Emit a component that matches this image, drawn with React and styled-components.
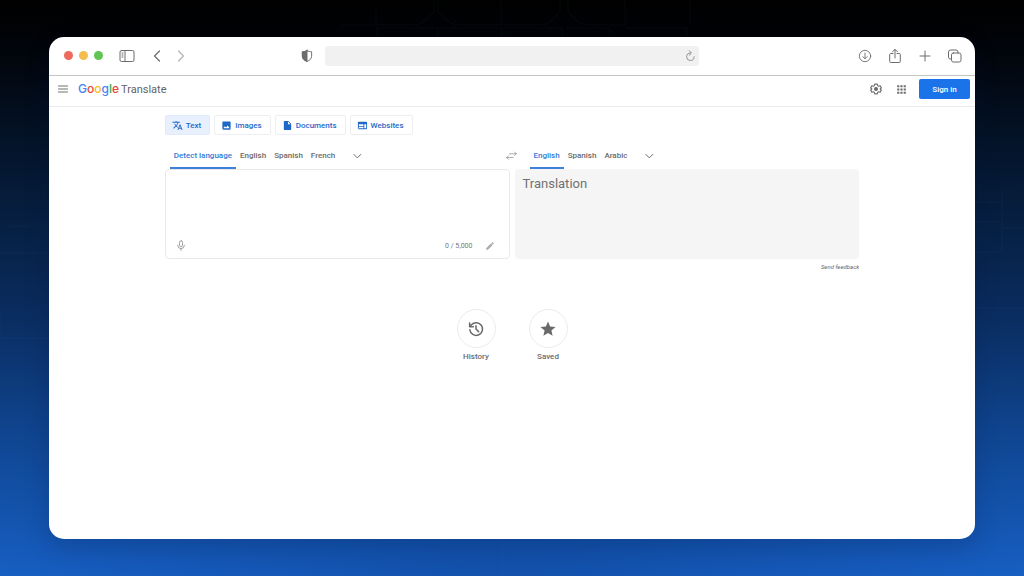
import React, { useState } from "react";
import styled, { createGlobalStyle, css } from "styled-components";

const Global = createGlobalStyle`
  *, *::before, *::after { box-sizing: border-box; }
  body { margin: 0; font-family: Roboto, "Liberation Sans", sans-serif; color: #5f6368; }
  button, textarea, input { font: inherit; color: inherit; }
`;

const Desktop = styled.div`
  position: relative;
  min-height: 100vh;
  padding: 37px 49px;
  display: flex;
  background:
    radial-gradient(ellipse 60% 40% at 50% 100%, rgba(8, 50, 120, 0.35), transparent),
    linear-gradient(180deg, #000 0%, #010409 8%, #051a36 32%, #0a2d60 55%, #104896 78%, #1862c8 100%);
`;

const Traces = styled.svg`
  position: absolute;
  inset: 0;
  width: 100%;
  height: 100%;
  fill: none;
  stroke: #6d9be0;
  stroke-opacity: 0.06;
`;

const Window = styled.div`
  position: relative;
  flex: 1;
  min-width: 0;
  display: flex;
  flex-direction: column;
  background: #fff;
  border-radius: 15px;
  overflow: hidden;
  box-shadow: 0 8px 24px rgba(3, 20, 60, 0.2);
`;

const BrowserBar = styled.div`
  display: grid;
  grid-template-columns: 1fr 374px 1fr;
  align-items: center;
  height: 39px;
  padding-bottom: 1px;
  border-bottom: 1px solid #c4c4c4;
`;

const BarSide = styled.div`
  display: flex;
  align-items: center;
  padding: ${(p) => (p.$end ? "0 12px 0 0" : "0 10px 0 15px")};
  justify-content: ${(p) => (p.$end ? "flex-end" : "flex-start")};
  gap: ${(p) => (p.$end ? "14px" : "0")};
`;

const Lights = styled.div`
  display: flex;
  gap: 6px;
  margin-right: 16px;
`;

const Light = styled.span`
  width: 9px;
  height: 9px;
  border-radius: 50%;
  background: ${(p) => p.$color};
`;

const IconButton = styled.button`
  display: flex;
  align-items: center;
  justify-content: center;
  width: ${(p) => p.$size || 16}px;
  height: ${(p) => p.$size || 16}px;
  padding: 0;
  border: 0;
  background: none;
  color: ${(p) => p.$color || "#6c6c6c"};
  cursor: pointer;
`;

const NavButtons = styled.div`
  display: flex;
  gap: 8px;
  margin-left: 14px;
`;

const Shield = styled(IconButton)`
  margin-left: auto;
`;

const Address = styled.div`
  display: flex;
  align-items: center;
  height: 20px;
  padding-right: 1px;
  border-radius: 4px;
  background: #f1f1f1;
`;

const AddressInput = styled.input`
  flex: 1;
  min-width: 0;
  height: 20px;
  padding: 0 8px;
  border: 0;
  outline: 0;
  background: none;
  font-size: 11px;
`;

const Header = styled.header`
  display: flex;
  align-items: center;
  height: 31px;
  padding: 0 5px 4px 6px;
  border-bottom: 1px solid #e8eaed;
`;

const Logo = styled.a`
  display: flex;
  align-items: baseline;
  gap: 2px;
  margin-left: 7px;
  color: #5f6368;
  font-size: 11px;
  line-height: 16px;
  text-decoration: none;
`;

const Brand = styled.span`
  font-family: Inter, sans-serif;
  font-size: 12px;
  font-weight: 500;
`;

const Letter = styled.span`
  color: ${(p) => p.$color};
`;

const HeaderActions = styled.div`
  display: flex;
  align-items: center;
  gap: 9px;
  margin-left: auto;
`;

const SignIn = styled.button`
  width: 51px;
  height: 20px;
  margin-left: 1px;
  padding: 0;
  border: 0;
  border-radius: 2px;
  background: #1a73e8;
  color: #fff;
  font-size: 8px;
  font-weight: 500;
  cursor: pointer;
`;

const Main = styled.main`
  width: 75%;
  margin: 0 auto;
  padding-top: 8px;
`;

const Modes = styled.nav`
  display: flex;
  gap: 4px;
`;

const Mode = styled.button`
  display: flex;
  align-items: center;
  gap: 3px;
  height: 20px;
  padding: 0 8px 0 6px;
  border: 1px solid ${(p) => (p.$active ? "#e1eafa" : "#eceef1")};
  border-radius: 2px;
  background: ${(p) => (p.$active ? "#e8f0fe" : "#fff")};
  color: #1f68c8;
  font-size: 8px;
  font-weight: 500;
  cursor: pointer;
`;

const Columns = styled.div`
  display: grid;
  grid-template-columns: 1fr 1fr;
  column-gap: 5px;
`;

const Languages = styled.div`
  display: flex;
  align-items: stretch;
  height: 27px;
  margin-top: 7px;
  padding-left: ${(p) => (p.$target ? "15px" : "5px")};
`;

const Language = styled.button`
  padding: 1px 4px 0;
  border: 0;
  border-bottom: 2px solid ${(p) => (p.$active ? "#3c80dc" : "transparent")};
  background: none;
  color: ${(p) => (p.$active ? "#3478d6" : "#6a6a6a")};
  font-size: 8px;
  font-weight: 500;
  cursor: pointer;
`;

const More = styled(IconButton)`
  align-self: center;
  margin-left: 8px;
`;

const Swap = styled(IconButton)`
  align-self: center;
  margin-left: auto;
  margin-right: -10px;
`;

const panel = css`
  height: 90px;
  border-radius: 4px;
`;

const Source = styled.div`
  ${panel}
  display: flex;
  flex-direction: column;
  border: 1px solid #e8e8e8;
`;

const SourceText = styled.textarea`
  flex: 1;
  min-height: 0;
  padding: 6px 8px;
  border: 0;
  outline: 0;
  resize: none;
  background: none;
  font-size: 13px;
`;

const SourceTools = styled.div`
  display: flex;
  align-items: center;
  height: 24px;
  padding: 0 12px 0 8px;
  gap: 10px;
`;

const Count = styled.span`
  margin-left: auto;
  font-size: 7px;
  color: #777;
`;

const Target = styled.output`
  ${panel}
  display: block;
  padding: 6px 8px;
  background: #f5f5f5;
  color: #717171;
  font-size: 13px;
  line-height: 18px;
`;

const FeedbackRow = styled.div`
  display: flex;
  justify-content: flex-end;
  margin-top: 4px;
`;

const Feedback = styled.a`
  color: #666;
  font-size: 6px;
  line-height: 8px;
  font-style: italic;
  text-decoration: none;
`;

const Shortcuts = styled.div`
  display: flex;
  justify-content: center;
  gap: 33px;
  margin-top: 38px;
`;

const Shortcut = styled.button`
  display: flex;
  flex-direction: column;
  align-items: center;
  gap: 4px;
  padding: 0;
  border: 0;
  background: none;
  color: #6a6a6a;
  font-size: 8px;
  font-weight: 500;
  line-height: 10px;
  cursor: pointer;
`;

const Disc = styled.span`
  display: flex;
  align-items: center;
  justify-content: center;
  width: 39px;
  height: 39px;
  border: 1px solid #ececec;
  border-radius: 50%;
`;

const Line = ({ size = 14, w = 1, box = 16, children }) => (
  <svg width={size} height={size} viewBox={`0 0 ${box} ${box}`} fill="none" stroke="currentColor" strokeWidth={w} strokeLinecap="round" strokeLinejoin="round" aria-hidden="true">{children}</svg>
);

const Solid = ({ size = 12, d }) => (
  <svg width={size} height={size} viewBox="0 0 24 24" fill="currentColor" aria-hidden="true"><path d={d} /></svg>
);

const glyph = {
  text: "M12.87 15.07l-2.54-2.51.03-.03A17.52 17.52 0 0 0 14.07 6H17V4h-7V2H8v2H1v1.99h11.17C11.5 7.92 10.44 9.75 9 11.35 8.07 10.32 7.3 9.19 6.69 8h-2c.73 1.63 1.73 3.17 2.98 4.56l-5.09 5.02L4 19l5-5 3.11 3.11.76-2.04zM18.5 10h-2L12 22h2l1.12-3h4.75L21 22h2l-4.5-12zm-2.62 7l1.62-4.33L19.12 17h-3.24z",
  images: "M21 19V5c0-1.100-.9-2-2-2H5c-1.100 0-2 .9-2 2v14c0 1.100.9 2 2 2h14c1.100 0 2-.9 2-2zM8.500 13.500l2.500 3.010L14.500 12l4.500 6H5l3.500-4.500z",
  documents: "M6 2c-1.100 0-2 .9-2 2v16c0 1.100.9 2 2 2h12c1.100 0 2-.9 2-2V8l-6-6H6zm7 7V3.500L18.500 9H13z",
  websites: "M20 4H4c-1.100 0-2 .9-2 2v12c0 1.100.9 2 2 2h16c1.100 0 2-.9 2-2V6c0-1.100-.9-2-2-2zm-6 14H4v-3.500h10V18zm0-5H4V9h10v4zm6 5h-4V9h4v9z",
  star: "M12 17.270L18.180 21l-1.640-7.030L22 9.240l-7.190-.61L12 2 9.190 8.630 2 9.240l5.460 4.730L5.820 21z",
  apps: "M4 4h4v4H4zM10 4h4v4h-4zM16 4h4v4h-4zM4 10h4v4H4zM10 10h4v4h-4zM16 10h4v4h-4zM4 16h4v4H4zM10 16h4v4h-4zM16 16h4v4h-4z",
  pencil: "M3 17.250V21h3.750L17.810 9.940l-3.750-3.750L3 17.250zM20.710 7.040a1 1 0 0 0 0-1.410l-2.340-2.340a1 1 0 0 0-1.410 0l-1.830 1.830 3.750 3.750 1.830-1.830z",
};

const modes = [["Text", "text"], ["Images", "images"], ["Documents", "documents"], ["Websites", "websites"]];
const brand = [["G", "#4285f4"], ["o", "#ea4335"], ["o", "#fbbc04"], ["g", "#4285f4"], ["l", "#34a853"], ["e", "#ea4335"]];

const Chevron = () => <Line size={10} w={1.600}><path d="M3 5.500l5.500 5.500L14 5.500" /></Line>;

function LanguageTabs({ names, target, children }) {
  const [active, setActive] = useState(names[0]);
  return (
    <Languages $target={target}>
      {names.map((n) => (
        <Language key={n} $active={n === active} onClick={() => setActive(n)}>{n}</Language>
      ))}
      <More aria-label="More languages" $size={20}><Chevron /></More>
      {children}
    </Languages>
  );
}

export default function App() {
  const [mode, setMode] = useState("Text");
  return (
    <Desktop>
      <Global />
      <Traces viewBox="0 0 1024 576" preserveAspectRatio="none" aria-hidden="true">
        <path d="M376 8v17h36q9 0 14-5l8-8V0M438 0v12l7 7q6 6 14 6h42V0M502 25h38q8 0 13-6l7-7V0M568 0v12l8 8q5 5 12 5h37V0M690 0v25M340 25h36M377 37v-9h61v9M440 28h62v9M504 28h58v9M566 28h40l8 5M626 28h61v9" />
        <path d="M975 222h24M1002 190v62M1003 228h21M975 202h27M975 252h24M975 308h49M0 253h49M0 338h49M1 312v26M502 539v37M10 226h20" />
      </Traces>
      <Window>
        <BrowserBar>
          <BarSide>
            <Lights><Light $color="#ec6a5e" /><Light $color="#f4bd4f" /><Light $color="#61c454" /></Lights>
            <IconButton aria-label="Sidebar">
              <Line size={16}><rect x="1" y="2.500" width="14" height="11" rx="1.500" /><path d="M6 2.500v11M3 5h1M3 7h1M3 9h1" /></Line>
            </IconButton>
            <NavButtons>
              <IconButton aria-label="Back"><Line size={16} w={1.200}><path d="M10.500 3L5.500 8l5 5" /></Line></IconButton>
              <IconButton aria-label="Forward" $color="#b5b5b5"><Line size={16} w={1.200}><path d="M5.500 3l5 5-5 5" /></Line></IconButton>
            </NavButtons>
            <Shield aria-label="Privacy report">
              <Line size={14} w={1.100}>
                <path d="M8 1.800c1.500 1 3.500 1.400 5.300 1.400v5c0 2.800-2.200 4.900-5.300 6-3.100-1.100-5.300-3.200-5.300-6v-5c1.800 0 3.800-.4 5.300-1.400z" />
                <path d="M8 1.800v12.400c-3.100-1.100-5.300-3.200-5.300-6v-5c1.800 0 3.800-.4 5.300-1.400z" fill="currentColor" />
              </Line>
            </Shield>
          </BarSide>
          <Address>
            <AddressInput aria-label="Address" />
            <IconButton aria-label="Reload" $color="#888">
              <Line size={12} w={1.200}><path d="M8.500 4a5 5 0 1 0 5 5M7 1l3 3-3 3" /></Line>
            </IconButton>
          </Address>
          <BarSide $end>
            <IconButton aria-label="Downloads"><Line><circle cx="8" cy="8" r="6.500" /><path d="M8 4.500v6.500M5.500 8.700L8 11.200l2.500-2.500" /></Line></IconButton>
            <IconButton aria-label="Share"><Line size={16}><path d="M6 5.500H3.700c-.6 0-1 .4-1 1v7c0 .6.400 1 1 1h8.600c.6 0 1-.4 1-1v-7c0-.6-.4-1-1-1H10M8 10V1.500M5.500 3.800L8 1.300l2.500 2.500" /></Line></IconButton>
            <IconButton aria-label="New tab"><Line size={16}><path d="M8 3v10M3 8h10" /></Line></IconButton>
            <IconButton aria-label="Tab overview"><Line size={16}><rect x="4.500" y="5" width="9.500" height="9" rx="1.800" /><path d="M4.500 11H3.500a2 2 0 0 1-2-2V4a2 2 0 0 1 2-2h5.500a2 2 0 0 1 2 2v1" /></Line></IconButton>
          </BarSide>
        </BrowserBar>
        <Header>
          <IconButton aria-label="Main menu"><Line size={12} w={1.300}><path d="M2 4h12M2 8h12M2 12h12" /></Line></IconButton>
          <Logo href="#">
            <Brand>{brand.map(([c, color], i) => <Letter key={i} $color={color}>{c}</Letter>)}</Brand>
            Translate
          </Logo>
          <HeaderActions>
            <IconButton aria-label="Settings">
              <Line size={12} w={1.500}><path d="M6.300 1.500h3.400l.5 2 1.300.8 2-.6 1.600 2.800L13.600 8l1.500 1.500-1.600 2.800-2-.6-1.300.8-.5 2H6.300l-.5-2-1.300-.8-2 .6L.9 9.500 2.400 8 .9 6.500l1.600-2.800 2 .6 1.300-.8z" /><circle cx="8" cy="8" r="1.900" fill="currentColor" /></Line>
            </IconButton>
            <IconButton aria-label="Google apps"><Solid size={13} d={glyph.apps} /></IconButton>
            <SignIn>Sign in</SignIn>
          </HeaderActions>
        </Header>
        <Main>
          <Modes>
            {modes.map(([name, icon]) => (
              <Mode key={name} $active={mode === name} onClick={() => setMode(name)}><Solid size={11} d={glyph[icon]} />{name}</Mode>
            ))}
          </Modes>
          <Columns>
            <LanguageTabs names={["Detect language", "English", "Spanish", "French"]}>
              <Swap aria-label="Swap languages" $color="#999"><Line size={11} w={1.200}><path d="M5 5.500h10M12.500 3L15 5.500 12.500 8M10.500 11H1M3.500 8.500L1 11l2.500 2.500" /></Line></Swap>
            </LanguageTabs>
            <LanguageTabs target names={["English", "Spanish", "Arabic"]} />
            <Source>
              <SourceText aria-label="Source text" />
              <SourceTools>
                <IconButton aria-label="Translate by voice" $color="#999" $size={14}>
                  <Line size={12} w={1.200}><rect x="6" y="1" width="4" height="8" rx="2" /><path d="M3.500 7a4.500 4.500 0 0 0 9 0M8 11.500v2.500" /></Line>
                </IconButton>
                <Count>0 / 5,000</Count>
                <IconButton aria-label="Handwriting" $color="#a8a8a8" $size={14}><Solid size={10} d={glyph.pencil} /></IconButton>
              </SourceTools>
            </Source>
            <Target>Translation</Target>
          </Columns>
          <FeedbackRow><Feedback href="#">Send feedback</Feedback></FeedbackRow>
          <Shortcuts>
            <Shortcut>
              <Disc>
                <Line size={18} w={2} box={24}><path d="M3.800 13A8.500 8.500 0 1 0 6 6.300L3.500 8.800M3.500 4v5h5M12 7.500V12l3.500 3.500" /></Line>
              </Disc>
              History
            </Shortcut>
            <Shortcut><Disc><Solid size={18} d={glyph.star} /></Disc>Saved</Shortcut>
          </Shortcuts>
        </Main>
      </Window>
    </Desktop>
  );
}
